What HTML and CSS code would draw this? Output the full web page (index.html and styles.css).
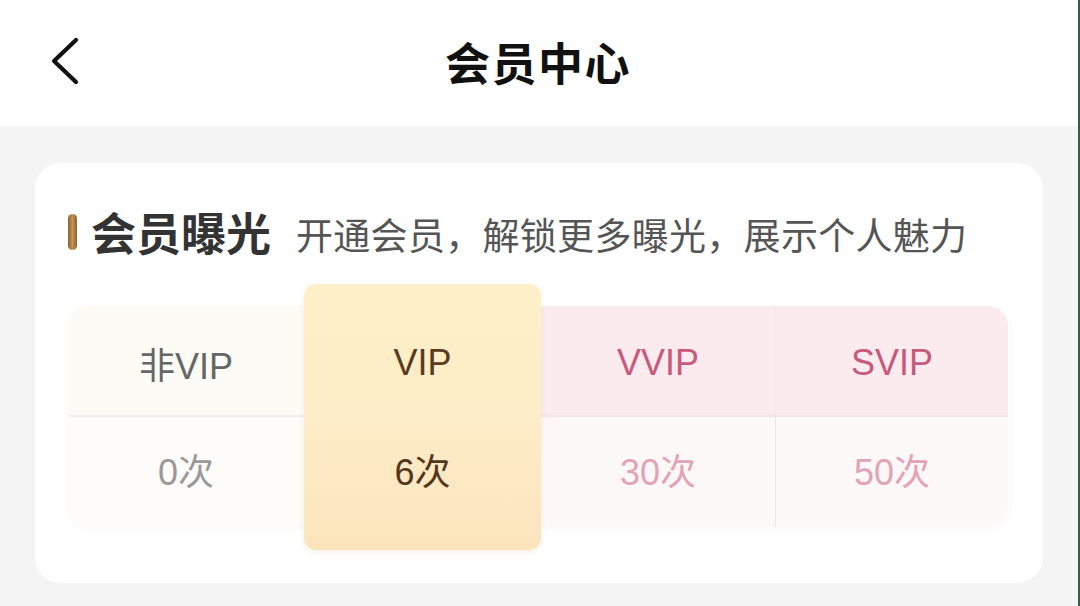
FILE: index.html
```html
<!DOCTYPE html>
<html lang="zh-CN">
<head>
<meta charset="utf-8">
<title>会员中心</title>
<link rel="stylesheet" href="styles.css">
</head>
<body>
<div class="screen">
  <div class="page">
    <header class="topbar">
      <div class="back">
        <svg width="40" height="56" viewBox="0 0 40 56"><path d="M25 4 L3 25 L25 46" fill="none" stroke="#111" stroke-width="4.2" stroke-linecap="round" stroke-linejoin="round"/></svg>
      </div>
      <h1 class="title">会员中心</h1>
    </header>
    <main class="content">
      <section class="card">
        <div class="card-head">
          <span class="bar"></span>
          <span class="card-title">会员曝光</span>
          <span class="card-sub">开通会员，解锁更多曝光，展示个人魅力</span>
        </div>
        <div class="table">
          <div class="col col-free">
            <div class="cell head">非VIP</div>
            <div class="cell val">0次</div>
          </div>
          <div class="col col-vip">
            <div class="cell head">VIP</div>
            <div class="cell val">6次</div>
          </div>
          <div class="col col-pink col-vvip">
            <div class="cell head">VVIP</div>
            <div class="cell val">30次</div>
          </div>
          <div class="col col-pink col-svip">
            <div class="cell head">SVIP</div>
            <div class="cell val">50次</div>
          </div>
        </div>
      </section>
    </main>
  </div>
  <div class="edge"></div>
</div>
</body>
</html>
```
FILE: styles.css
```css
* { box-sizing: border-box; margin: 0; padding: 0; }
html, body { width: 1080px; height: 606px; overflow: hidden; }
body {
  font-family: "Liberation Sans", "Noto Sans CJK SC", sans-serif;
  background: #f4f4f4;
}
.screen { display: flex; height: 606px; }
.page { flex: 1; display: flex; flex-direction: column; background: #f4f4f4; }
.edge { width: 2px; background: #3d5b44; }

.topbar {
  height: 126px;
  background: #fff;
  display: flex;
  align-items: center;
  justify-content: center;
  position: relative;
}
.back { position: absolute; left: 51px; top: 36px; width: 40px; height: 56px; }
.title {
  font-family: "Noto Sans CJK SC", sans-serif;
  font-size: 45px;
  font-weight: 700;
  color: #111;
  letter-spacing: 1.5px;
  margin-left: -2px;
  margin-top: -3px;
}

.content { padding: 37px 35px 0 35px; }
.card {
  background: #fff;
  border-radius: 26px;
  padding: 47px 33px 33px 33px;
  height: 420px;
}
.card-head { display: flex; align-items: center; height: 44px; margin-bottom: 52px; }
.bar {
  width: 9px; height: 36px; border-radius: 5px;
  background: linear-gradient(90deg, #8f5e26, #c3955a 50%, #8f5e26);
  margin-right: 16px;
}
.card-title {
  font-family: "Noto Sans CJK SC", sans-serif;
  font-size: 45px; font-weight: 700; color: #333;
  line-height: 44px;
  margin-left: -2px;
  margin-right: 25px;
}
.card-sub {
  font-family: "Noto Sans CJK SC", sans-serif;
  font-size: 37px; font-weight: 400; color: #555;
  letter-spacing: 0.3px;
  line-height: 44px;
  margin-top: 4px;
}

.table {
  display: grid;
  grid-template-columns: 236px 237px 235px 232px;
  height: 221px;
  border-radius: 20px;
  box-shadow: 0 1px 4px rgba(0,0,0,0.04);
}
.col { display: flex; flex-direction: column; }
.cell {
  display: flex; align-items: center; justify-content: center;
  font-size: 36px;
}
.head { height: 111px; padding-top: 5px; border-bottom: 2px solid #efeeee; }
.val { flex: 1; padding-bottom: 6px; }

.col-free { border-radius: 20px 0 0 20px; background: #fdfcf9; }
.col-free .head { color: #666; background: #fcfbf6; border-top-left-radius: 20px; }
.col-free .val { color: #999; }

.col-vip {
  margin: -22px 0 -23px 0;
  padding: 22px 0 23px 0;
  border-radius: 12px;
  background: linear-gradient(180deg, #fdf0c9 0%, #fdecc7 55%, #fbe4bc 100%);
  box-shadow: 0 2px 6px rgba(200,160,90,0.15);
  position: relative;
  z-index: 1;
}
.col-vip .head { color: #5a3b1f; border-bottom-color: transparent; }
.col-vip .val { color: #54361c; }

.col-pink { background: #fdf8f8; }
.col-pink .head { background: #fbebee; color: #c75a7c; border-bottom-color: #f5e3e6; }
.col-pink .val { color: #e3a3b6; }
.col-vvip { border-right: 1px solid #efe6e7; }
.col-svip { border-radius: 0 20px 20px 0; }
.col-svip .head { border-top-right-radius: 20px; }
```
